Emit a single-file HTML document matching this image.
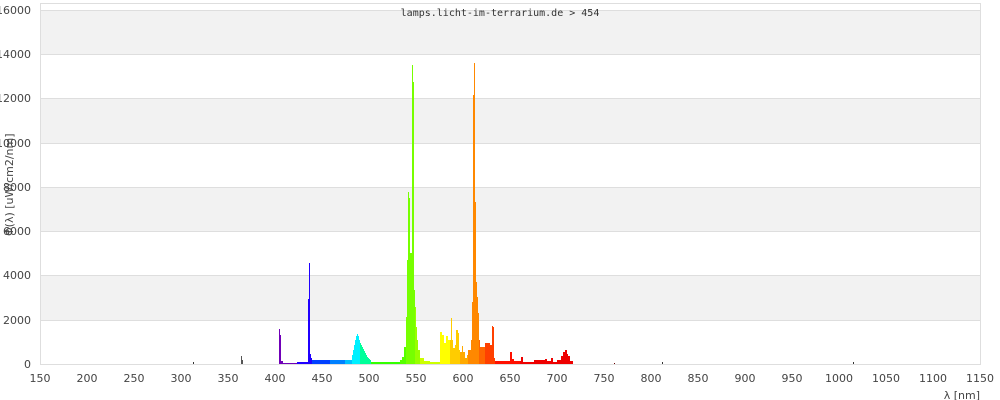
<!DOCTYPE html>
<html><head><meta charset="utf-8"><style>
body{margin:0;background:#fff;width:1000px;height:400px;overflow:hidden}
svg{display:block}
text{font-family:"DejaVu Sans","Liberation Sans",sans-serif;font-size:11px;fill:#444}
</style></head><body>
<svg width="1000" height="400" xmlns="http://www.w3.org/2000/svg">
<rect x="40" y="10" width="941" height="44" fill="#f2f2f2"/>
<rect x="40" y="98" width="941" height="45" fill="#f2f2f2"/>
<rect x="40" y="187" width="941" height="44" fill="#f2f2f2"/>
<rect x="40" y="275" width="941" height="45" fill="#f2f2f2"/>
<g stroke="#dedede" stroke-width="1">
<line x1="40" y1="10.5" x2="981" y2="10.5"/><line x1="40" y1="54.5" x2="981" y2="54.5"/>
<line x1="40" y1="98.5" x2="981" y2="98.5"/><line x1="40" y1="143.5" x2="981" y2="143.5"/>
<line x1="40" y1="187.5" x2="981" y2="187.5"/><line x1="40" y1="231.5" x2="981" y2="231.5"/>
<line x1="40" y1="275.5" x2="981" y2="275.5"/><line x1="40" y1="320.5" x2="981" y2="320.5"/>
<line x1="40" y1="364.5" x2="981" y2="364.5"/>
<line x1="40.5" y1="3" x2="40.5" y2="365"/><line x1="980.5" y1="3" x2="980.5" y2="365"/>
<line x1="40" y1="3.5" x2="981" y2="3.5"/>
</g>
<g shape-rendering="crispEdges">
<rect x="193" y="362" width="1" height="2" fill="#333"/>
<rect x="241" y="356" width="1" height="8" fill="#555"/><rect x="242" y="360" width="1" height="4" fill="#555"/>
<rect x="614" y="363" width="1" height="1" fill="#600"/><rect x="662" y="362" width="1" height="2" fill="#333"/><rect x="853" y="362" width="1" height="2" fill="#333"/>
<g fill="#7000b8"><rect x="279" y="329" width="1" height="35"/><rect x="280" y="335" width="1" height="29"/><rect x="281" y="361" width="2" height="3"/><rect x="283" y="363" width="14" height="1"/></g>
<g fill="#2000ff"><rect x="297" y="362" width="11" height="2"/><rect x="308" y="299" width="1" height="65"/><rect x="309" y="263" width="1" height="101"/><rect x="310" y="354" width="1" height="10"/><rect x="311" y="358" width="1" height="6"/></g>
<rect x="312" y="360" width="18" height="4" fill="#0040ff"/>
<rect x="330" y="360" width="15" height="4" fill="#0080ff"/>
<rect x="345" y="360" width="7" height="4" fill="#00c0ff"/>
<path fill="#00f0ff" d="M352 364V355H353V350H354V345H355V340H356V336H357V334H358V336H359V340H360V364Z"/>
<path fill="#00ff99" d="M360 364V343H361V345H362V347H363V349H364V351H365V353H366V355H367V357H368V358H369V359H370V360H371V364Z"/>
<rect x="371" y="362" width="29" height="2" fill="#33ff00"/>
<path fill="#55ff00" d="M400 364V360H402V357H404V347H406V364Z"/>
<path fill="#77ff00" d="M406 364V317H407V260H408V192H409V198H410V253H412V65H413V82H414V290H415V364Z"/>
<path fill="#99ff00" d="M415 364V307H416V327H417V340H418V350H420V364Z"/>
<path fill="#ccff00" d="M420 364V358H424V361H430V362H440V364Z"/>
<path fill="#ffff00" d="M440 364V332H442V335H444V343H446V336H448V340H450V364Z"/>
<path fill="#ffcc00" d="M450 364V340H451V318H452V340H453V348H455V345H456V330H458V333H459V350H460V364Z"/>
<path fill="#ffaa00" d="M460 364V352H462V346H463V352H465V358H467V355H468V364Z"/>
<path fill="#ff8800" d="M468 364V350H471V340H472V302H473V95H474V63H475V202H476V282H477V297H478V313H479V364Z"/>
<path fill="#ff6600" d="M479 364V340H480V347H485V364Z"/>
<path fill="#ff4000" d="M485 364V343H490V345H492V326H493V327H494V358H495V364Z"/>
<path fill="#ff1000" d="M495 364V361H510V352H512V359H514V361H520V364Z"/>
<path fill="#ee0000" d="M520 364V361H521V357H523V362H534V360H545V359H547V361H551V358H553V362H557V360H561V356H563V352H565V350H567V354H568V356H570V361H573V364Z"/>
</g>
<text x="500" y="16" text-anchor="middle" style="font-family:'DejaVu Sans Mono','Liberation Mono',monospace;font-size:10px;fill:#333">lamps.licht-im-terrarium.de &gt; 454</text>
<g text-anchor="end">
<text x="31" y="14">16000</text><text x="31" y="58">14000</text><text x="31" y="102">12000</text>
<text x="31" y="147">10000</text><text x="31" y="191">8000</text><text x="31" y="235">6000</text>
<text x="31" y="279">4000</text><text x="31" y="324">2000</text><text x="31" y="368">0</text>
</g>
<g text-anchor="middle">
<text x="40" y="382">150</text><text x="87" y="382">200</text><text x="134" y="382">250</text>
<text x="181" y="382">300</text><text x="228" y="382">350</text><text x="275" y="382">400</text>
<text x="322" y="382">450</text><text x="369" y="382">500</text><text x="416" y="382">550</text>
<text x="463" y="382">600</text><text x="510" y="382">650</text><text x="557" y="382">700</text>
<text x="604" y="382">750</text><text x="651" y="382">800</text><text x="698" y="382">850</text>
<text x="745" y="382">900</text><text x="792" y="382">950</text><text x="839" y="382">1000</text>
<text x="886" y="382">1050</text><text x="933" y="382">1100</text><text x="980" y="382">1150</text>
</g>
<text x="980" y="399" text-anchor="end">λ [nm]</text>
<text transform="translate(13,236) rotate(-90)" text-anchor="start">Φ(λ)  [uW/cm2/nm]</text>
</svg>
</body></html>
